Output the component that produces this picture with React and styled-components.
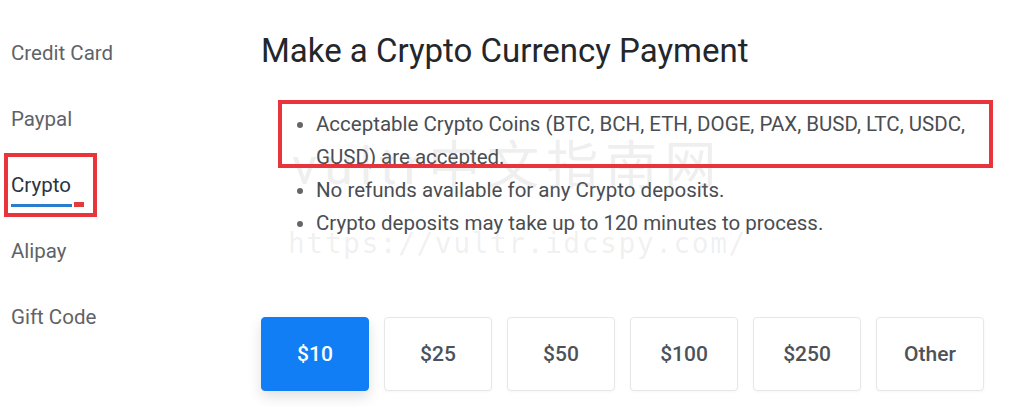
import React from 'react'
import styled, { createGlobalStyle } from 'styled-components'

const GlobalStyle = createGlobalStyle`
  body {
    margin: 0;
    background: #fff;
    font-family: Roboto, "Noto Sans", sans-serif;
  }
`;

const Page = styled.div`
  position: relative;
  display: flex;
  width: 1024px;
  height: 407px;
  overflow: hidden;
  background: #fff;
`;

const Sidebar = styled.nav`
  width: 261px;
  padding: 20px 0 0 11px;
  box-sizing: border-box;
  display: flex;
  flex-direction: column;
`;

const SideItem = styled.div`
  position: relative;
  height: 66px;
  display: flex;
  align-items: center;
  font-size: 20.5px;
  color: ${props => props.active ? '#2b3440' : '#5f6368'};
`;

const SideLabel = styled.span`
  position: relative;
`;

const Underline = styled.span`
  position: absolute;
  left: 0;
  top: 31px;
  width: 61px;
  height: 3px;
  background: #2a7ccf;
`;

const Marker = styled.span`
  position: absolute;
  left: 63px;
  top: 29px;
  width: 10px;
  height: 5px;
  background: #e23b3b;
`;

const RedBox = styled.div`
  position: absolute;
  border: 4px solid #e8353b;
  pointer-events: none;
`;

const Main = styled.main`
  flex: 1;
  display: flex;
  flex-direction: column;
`;

const Title = styled.h1`
  margin: 33px 0 0 0;
  font-size: 33px;
  line-height: 36px;
  font-weight: 400;
  color: #23272b;
`;

const Bullets = styled.ul`
  margin: 39px 0 0 0;
  padding: 0 0 0 55px;
  font-size: 20.5px;
  line-height: 33px;
  color: #4a4d52;
  width: 670px;
`;

const Bullet = styled.li`
  &::marker {
    color: #666;
  }
`;

const Amounts = styled.div`
  margin-top: 77px;
  display: flex;
  gap: 15px;
`;

const Amount = styled.button`
  width: 108px;
  height: 74px;
  border-radius: 4px;
  border: 1px solid ${props => props.active ? '#117ef6' : '#e6e7e9'};
  background: ${props => props.active ? '#117ef6' : '#fff'};
  color: ${props => props.active ? '#fff' : '#4d5259'};
  font-family: Roboto, sans-serif;
  font-size: 21px;
  font-weight: 500;
  box-shadow: ${props => props.active ? '0 6px 14px rgba(0,0,0,0.12)' : '0 1px 3px rgba(0,0,0,0.04)'};
`;

const Watermark = styled.div`
  position: absolute;
  left: ${props => props.x}px;
  top: ${props => props.y}px;
  font-family: ${props => props.mono ? '"DejaVu Sans Mono", monospace' : 'Roboto, "Noto Sans CJK SC", sans-serif'};
  font-size: ${props => props.size}px;
  letter-spacing: ${props => props.spacing || 0}px;
  color: rgba(150, 150, 150, 0.15);
  white-space: nowrap;
  pointer-events: none;
`;

const methods = ['Credit Card', 'Paypal', 'Crypto', 'Alipay', 'Gift Code'];
const amounts = ['$10', '$25', '$50', '$100', '$250', 'Other'];

export default function App() {
  return (
    <Page>
      <GlobalStyle />
      <Sidebar>
        {methods.map(method => (
          <SideItem key={method} active={method === 'Crypto'}>
            <SideLabel>
              {method}
              {method === 'Crypto' && <><Underline /><Marker /></>}
            </SideLabel>
          </SideItem>
        ))}
      </Sidebar>
      <Main>
        <Title>Make a Crypto Currency Payment</Title>
        <Bullets>
          <Bullet>Acceptable Crypto Coins (BTC, BCH, ETH, DOGE, PAX, BUSD, LTC, USDC, GUSD) are accepted.</Bullet>
          <Bullet>No refunds available for any Crypto deposits.</Bullet>
          <Bullet>Crypto deposits may take up to 120 minutes to process.</Bullet>
        </Bullets>
        <Amounts>
          {amounts.map((amount, amountIdx) => (
            <Amount key={amount} active={amountIdx === 0}>{amount}</Amount>
          ))}
        </Amounts>
      </Main>
      <Watermark x={292} y={124} size={52} spacing={7}>vultr中文指南网</Watermark>
      <Watermark x={288} y={227} size={28} spacing={1.5} mono>https://vultr.idcspy.com/</Watermark>
      <RedBox style={{ left: 4, top: 153, width: 85, height: 56 }} />
      <RedBox style={{ left: 278, top: 100, width: 707, height: 60 }} />
    </Page>
  )
}
